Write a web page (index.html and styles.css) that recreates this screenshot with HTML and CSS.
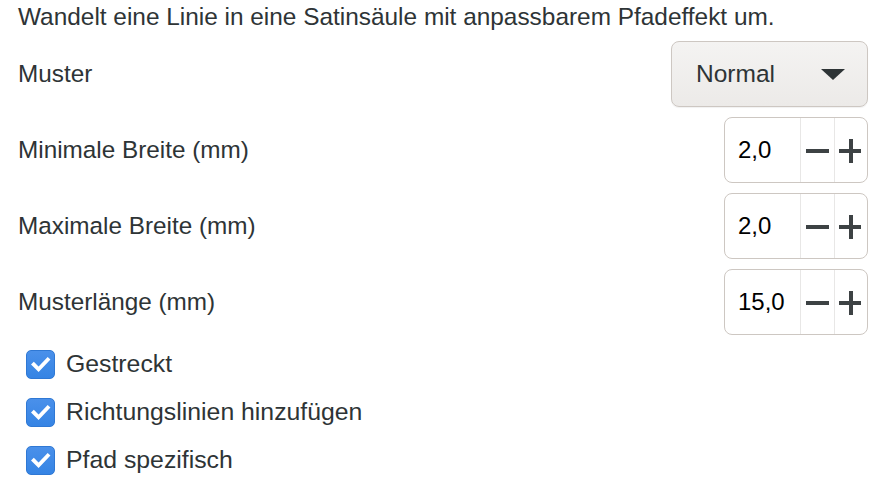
FILE: index.html
```html
<!DOCTYPE html>
<html lang="de">
<head>
  <meta charset="UTF-8">
  <meta name="viewport" content="width=device-width, initial-scale=1.0">
  <title>Satinsäule</title>
  <link rel="stylesheet" href="styles.css">
</head>
<body>
  <div class="panel">
    <p class="intro">Wandelt eine Linie in eine Satinsäule mit anpassbarem Pfadeffekt um.</p>

    <div class="row">
      <span class="label">Muster</span>
      <button class="combo">
        <span>Normal</span>
        <span class="arrow"></span>
      </button>
    </div>

    <div class="row">
      <span class="label">Minimale Breite (mm)</span>
      <div class="spin">
        <span class="value">2,0</span>
        <span class="btn minus"></span>
        <span class="btn plus"></span>
      </div>
    </div>

    <div class="row">
      <span class="label">Maximale Breite (mm)</span>
      <div class="spin">
        <span class="value">2,0</span>
        <span class="btn minus"></span>
        <span class="btn plus"></span>
      </div>
    </div>

    <div class="row">
      <span class="label">Musterlänge (mm)</span>
      <div class="spin">
        <span class="value">15,0</span>
        <span class="btn minus"></span>
        <span class="btn plus"></span>
      </div>
    </div>

    <!-- Optionen -->
    <ul class="checks">
      <li><span class="box"><svg viewBox="0 0 28 28" width="28" height="28"><path d="M7 14.5 L12 19.5 L21.5 9.5" fill="none" stroke="#fff" stroke-width="4" stroke-linecap="square"/></svg></span>Gestreckt</li>
      <li><span class="box"><svg viewBox="0 0 28 28" width="28" height="28"><path d="M7 14.5 L12 19.5 L21.5 9.5" fill="none" stroke="#fff" stroke-width="4" stroke-linecap="square"/></svg></span>Richtungslinien hinzufügen</li>
      <li><span class="box"><svg viewBox="0 0 28 28" width="28" height="28"><path d="M7 14.5 L12 19.5 L21.5 9.5" fill="none" stroke="#fff" stroke-width="4" stroke-linecap="square"/></svg></span>Pfad spezifisch</li>
    </ul>
  </div>
</body>
</html>
```

FILE: styles.css
```css
* {
  margin: 0;
  padding: 0;
  box-sizing: border-box;
}

body {
  font-family: "Liberation Sans", Arial, sans-serif;
  background-color: #fff;
  color: #2e3436;
  font-size: 24px;
}

.panel {
  padding: 4px 18px 0 18px;
}

.intro {
  font-size: 24.4px;
  line-height: 26px;
  margin-bottom: 11px;
}

.row {
  display: flex;
  justify-content: space-between;
  align-items: center;
  margin-bottom: 10px;
}

.label {
  font-size: 24.3px;
}

.combo {
  width: 197px;
  height: 66px;
  display: flex;
  align-items: center;
  justify-content: space-between;
  padding: 0 22px 0 24px;
  background: linear-gradient(#f4f3f2, #eceae8);
  border: 1px solid #cdc7c2;
  border-radius: 8px;
  box-shadow: 0 1px 1px rgba(0, 0, 0, 0.06);
  font-family: inherit;
  font-size: 24.5px;
  color: #2e3436;
}

.arrow {
  width: 0;
  height: 0;
  border-left: 12px solid transparent;
  border-right: 12px solid transparent;
  border-top: 11px solid #2e3436;
}

.spin {
  width: 144px;
  height: 66px;
  display: flex;
  border: 1px solid #cdc7c2;
  border-radius: 8px;
  background: #fff;
  overflow: hidden;
}

.spin .value {
  width: 76px;
  padding-left: 13px;
  display: flex;
  align-items: center;
  font-size: 24px;
  color: #000;
}

.spin .btn {
  position: relative;
  width: 34px;
  border-left: 1px solid #e8e7e6;
}

.spin .btn::before,
.spin .btn.plus::after {
  content: "";
  position: absolute;
  background: #3d4244;
  left: 5px;
  right: 5px;
  top: 31px;
  height: 4px;
}

.spin .btn.plus::after {
  left: 14px;
  right: auto;
  width: 4px;
  top: 21px;
  height: 24px;
}

.spin .btn.plus::before {
  left: 4px;
  right: 6px;
}

.checks {
  list-style: none;
  margin-top: -5px;
}

.checks li {
  display: flex;
  align-items: center;
  height: 48px;
  padding-left: 8px;
  font-size: 24.8px;
}

.box {
  width: 29px;
  height: 29px;
  border-radius: 5px;
  background: linear-gradient(#4a90ea, #3584e4);
  border: 1px solid #2f78d4;
  margin-right: 11px;
  display: flex;
  align-items: center;
  justify-content: center;
}

.box svg {
  display: block;
}
```
